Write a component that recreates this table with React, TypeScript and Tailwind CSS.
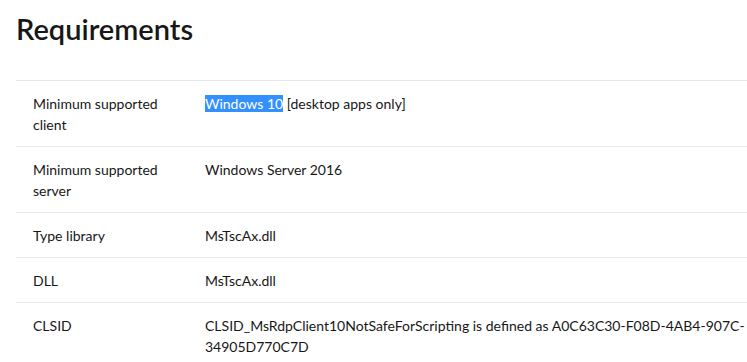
const rows: { label: string[]; value: React.ReactNode }[] = [
  {
    label: ["Minimum supported", "client"],
    value: (
      <>
        <span className="bg-[#3390ff] text-white">Windows 10</span> [desktop apps only]
      </>
    ),
  },
  { label: ["Minimum supported", "server"], value: "Windows Server 2016" },
  { label: ["Type library"], value: "MsTscAx.dll" },
  { label: ["DLL"], value: "MsTscAx.dll" },
  {
    label: ["CLSID"],
    value: (
      <>
        CLSID_MsRdpClient10NotSafeForScripting is defined as A0C63C30-F08D-4AB4-907C-
        <br />
        34905D770C7D
      </>
    ),
  },
];

const App = () => {
  return (
    <div className="min-h-screen bg-white pl-4 pt-[9px] font-['Segoe_UI','Lato',sans-serif] text-[#171717]">
      <h1 className="text-[29px] font-semibold leading-[40px]">Requirements</h1>
      <div className="mt-[31px] w-[760px] border-t border-[#e6e6e6]">
        {rows.map((row, i) => (
          <div key={i} className="flex border-b border-[#e6e6e6] text-[14px] leading-[21px]">
            <div className="w-[173px] shrink-0 pb-[11px] pl-[17px] pt-3">
              {row.label.map((l, j) => (
                <div key={j}>{l}</div>
              ))}
            </div>
            <div className="pb-[11px] pl-4 pt-3">{row.value}</div>
          </div>
        ))}
      </div>
    </div>
  );
};

export default App;
